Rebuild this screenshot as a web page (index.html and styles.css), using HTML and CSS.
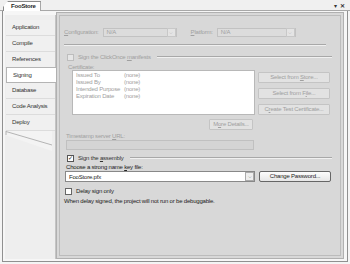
FILE: index.html
```html
<!DOCTYPE html>
<html>
  <head>
    <meta charset="utf-8">
    <title>FooStore</title>
    <link rel="stylesheet" href="styles.css">
  </head>
  <body>
    <div class="window">
      <div class="titlebar">
        <div class="doc-tab">FooStore</div>
        <div class="win-btns"><span class="pin">▾</span><span class="close">✕</span></div>
      </div>
      <div class="frame">
        <div class="nav">
          <div class="nav-item">Application</div>
          <div class="nav-item">Compile</div>
          <div class="nav-item">References</div>
          <div class="nav-item selected">Signing</div>
          <div class="nav-item">Database</div>
          <div class="nav-item">Code Analysis</div>
          <div class="nav-item">Deploy</div>
          <svg class="nav-tail" width="50" height="20" viewBox="0 0 50 20">
            <polygon points="0,0 47,0 47,20 0,4" fill="#f3f3f3"/>
            <line x1="1" y1="0" x2="1" y2="4" stroke="#b4b4b4"/>
            <line x1="1" y1="0.5" x2="47" y2="14" stroke="#b4b4b4"/>
          </svg>
        </div>
        <div class="page">
          <div class="page-inner">
            <div class="config-row">
              <span class="lbl dis"><u>C</u>onfiguration:</span>
              <div class="combo dis w-config"><span>N/A</span><i class="arrow">⌵</i></div>
              <span class="lbl dis platform"><u>P</u>latform:</span>
              <div class="combo dis w-platform"><span>N/A</span><i class="arrow">⌵</i></div>
            </div>
            <div class="sep"></div>

            <div class="group-head">
              <span class="check dis"></span>
              <span class="dis">Sign the ClickOnce <u>m</u>anifests</span>
              <span class="group-line"></span>
            </div>
            <div class="lbl dis cert-lbl">Certificate:</div>
            <div class="cert-area">
              <div class="cert-box">
                <div class="cert-row"><span>Issued To</span><span>(none)</span></div>
                <div class="cert-row"><span>Issued By</span><span>(none)</span></div>
                <div class="cert-row"><span>Intended Purpose</span><span>(none)</span></div>
                <div class="cert-row"><span>Expiration Date</span><span>(none)</span></div>
              </div>
              <div class="cert-btns">
                <div class="btn dis">Select from <u>S</u>tore...</div>
                <div class="btn dis">Select from F<u>i</u>le...</div>
                <div class="btn dis">C<u>r</u>eate Test Certificate...</div>
              </div>
            </div>
            <div class="more-row"><div class="btn dis more">M<u>o</u>re Details...</div></div>
            <div class="lbl dis ts-lbl">Timestamp server <u>U</u>RL:</div>
            <div class="textbox dis"></div>

            <div class="group-head assembly">
              <span class="check on">✓</span>
              <span>Sign the <u>a</u>ssembly</span>
              <span class="group-line"></span>
            </div>
            <div class="lbl key-lbl">Choose a strong name <u>k</u>ey file:</div>
            <div class="key-row">
              <div class="combo key"><span>FooStore.pfx</span><i class="arrow">⌵</i></div>
              <div class="btn normal">Change Password...</div>
            </div>
            <div class="delay-row">
              <span class="check"></span>
              <span>Delay sign only</span>
            </div>
            <div class="note">When delay signed, the project will not run or be debuggable.</div>
          </div>
        </div>
      </div>
    </div>
  </body>
</html>
```

FILE: styles.css
```css
html, body {
  margin: 0;
  padding: 0;
}
body {
  width: 350px;
  height: 264px;
  overflow: hidden;
  font-family: "Liberation Sans", Arial, sans-serif;
  font-size: 6px;
  letter-spacing: -0.2px;
  color: #333;
  background: #f4f4f4;
}
u {
  text-decoration: underline;
}

.window {
  width: 350px;
  height: 264px;
  display: flex;
  flex-direction: column;
}

/* document tab strip */
.titlebar {
  height: 10px;
  flex: none;
  display: flex;
  align-items: flex-end;
  justify-content: space-between;
  border-bottom: 1px solid #a8a8a8;
  background: #f0f0f0;
  position: relative;
}
.doc-tab {
  margin-left: 3px;
  height: 9px;
  line-height: 9px;
  padding: 0 4px 0 7px;
  font-weight: bold;
  font-size: 6px;
  color: #222;
  background: #fff;
  border: 1px solid #8a8a8a;
  border-bottom: none;
  clip-path: polygon(5px 0, 100% 0, 100% 100%, 0 100%, 0 6px);
  position: relative;
  top: 1px;
}
.win-btns {
  display: flex;
  gap: 3px;
  padding-right: 5px;
  height: 10px;
  align-items: center;
  font-size: 6px;
  color: #333;
}
.win-btns .close {
  font-weight: bold;
  font-size: 6px;
}

/* outer frame */
.frame {
  flex: 1;
  margin: 0 2px 2px 2px;
  border: 1px solid #909090;
  border-top: none;
  background: #f6f6f6;
  display: flex;
  padding: 4px 3px 2px 2px;
}

/* left navigation */
.nav {
  width: 50px;
  flex: none;
  padding-top: 5px;
  background: #eeeeee;
  border-right: 1px solid #c4c4c4;
  display: flex;
  flex-direction: column;
}
.nav-item {
  height: 15px;
  line-height: 15px;
  padding-left: 6px;
  margin-left: 1px;
  border-bottom: 1px solid #dcdcdc;
  background: #f0f0f0;
  color: #333;
  white-space: nowrap;
}
.nav-item.selected {
  background: #fff;
  border: 1px solid #b4b4b4;
  border-right: none;
  margin-right: -1px;
  height: 14px;
  line-height: 14px;
  margin-top: -1px;
}
.nav-tail {
  display: block;
}

/* page body */
.page {
  flex: 1;
  background: #d8d8d8;
  border: 1px solid #b0b0b0;
  padding: 2px;
  margin-top: -3px;
}
.page-inner {
  height: 100%;
  box-sizing: border-box;
  border: 1px solid #bcbcbc;
  padding: 11px 8px 0 4px;
  display: flex;
  flex-direction: column;
}

.dis {
  color: #a0a0a0;
}
.lbl {
  white-space: nowrap;
}

.config-row {
  display: flex;
  align-items: center;
  height: 10px;
}
.combo {
  height: 9px;
  box-sizing: border-box;
  border: 1px solid #c2c2c2;
  background: #dcdcdc;
  display: flex;
  align-items: center;
  justify-content: space-between;
  padding-left: 3px;
  font-size: 6px;
}
.combo .arrow {
  font-style: normal;
  width: 7px;
  height: 7px;
  line-height: 6px;
  text-align: center;
  font-size: 5px;
  border: 1px solid #c8c8c8;
  background: #e4e4e4;
  color: #999;
  margin-right: 0;
}
.w-config {
  width: 74px;
  margin-left: 4px;
}
.platform {
  margin-left: 14px;
}
.w-platform {
  width: 79px;
  margin-left: 4px;
}

.sep {
  height: 0;
  border-top: 1px solid #a8a8a8;
  border-bottom: 1px solid #f0f0f0;
  margin: 7px 6px 0 0;
}

.group-head {
  display: flex;
  align-items: center;
  gap: 4px;
  margin-top: 7px;
  padding-left: 3px;
  height: 8px;
}
.group-line {
  flex: 1;
  border-top: 1px solid #a8a8a8;
  border-bottom: 1px solid #f0f0f0;
  margin-left: 2px;
}
.check {
  width: 7px;
  height: 7px;
  box-sizing: border-box;
  border: 1px solid #bdbdbd;
  background: #e6e6e6;
  flex: none;
  font-size: 6px;
  line-height: 5px;
  text-align: center;
}
.check.on {
  border-color: #555;
  background: #fff;
  color: #222;
}
.delay-row .check {
  border-color: #666;
  background: #fff;
}

.cert-lbl {
  margin-top: 3px;
  padding-left: 4px;
}
.cert-area {
  display: flex;
  gap: 3px;
  margin-top: 0;
}
.cert-box {
  width: 183px;
  height: 45px;
  box-sizing: border-box;
  margin-left: 8px;
  background: #fff;
  border: 1px solid #b8b8b8;
  padding: 1px 3px;
}
.cert-row {
  display: flex;
  height: 7px;
  line-height: 7px;
  color: #a0a0a0;
}
.cert-row span:first-child {
  width: 48px;
}
.cert-btns {
  display: flex;
  flex-direction: column;
  gap: 5px;
  padding-top: 2px;
}
.btn {
  height: 11px;
  line-height: 9px;
  box-sizing: border-box;
  width: 72px;
  text-align: center;
  border: 1px solid #c4c4c4;
  background: #e2e2e2;
  white-space: nowrap;
  border-radius: 1px;
}
.more-row {
  display: flex;
  justify-content: flex-end;
  padding-right: 79px;
  margin-top: 4px;
}
.btn.more {
  width: 44px;
}
.ts-lbl {
  margin-top: 3px;
  padding-left: 2px;
}
.textbox {
  width: 188px;
  height: 10px;
  box-sizing: border-box;
  border: 1px solid #c0c0c0;
  background: #d4d4d4;
  margin: 1px 0 0 2px;
}

.assembly {
  margin-top: 4px;
}
.key-lbl {
  margin-top: 2px;
  padding-left: 2px;
  color: #222;
}
.key-row {
  display: flex;
  gap: 4px;
  margin-top: 1px;
  padding-left: 1px;
}
.combo.key {
  width: 190px;
  height: 11px;
  background: #fff;
  border-color: #888;
  color: #222;
}
.combo.key .arrow {
  color: #333;
  border-color: #aaa;
  background: #eee;
}
.btn.normal {
  color: #222;
  border-color: #666;
  border-radius: 2px;
  background: linear-gradient(#fdfdfd, #e6e6e6);
}
.delay-row {
  display: flex;
  align-items: center;
  gap: 4px;
  margin-top: 5px;
  padding-left: 1px;
  height: 8px;
  color: #222;
}
.note {
  margin-top: 3px;
  color: #222;
  white-space: nowrap;
}
```
